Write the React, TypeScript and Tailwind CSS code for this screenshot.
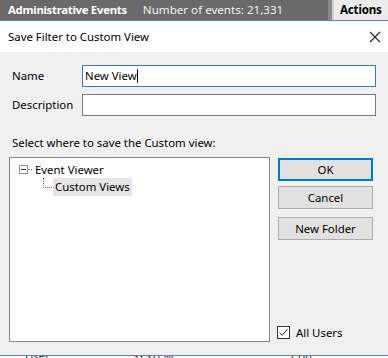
import React from "react";

export default function App() {
  const font = { fontFamily: '"Noto Sans", "Segoe UI", sans-serif' };
  return (
    <div className="w-[388px] h-[358px] overflow-hidden bg-white flex flex-col text-[11.4px] text-black" style={font}>
      {/* top bar */}
      <div className="h-[20px] flex bg-[#6a6a6a] shrink-0">
        <div className="flex-1 flex items-center pl-[8px] text-white">
          <span className="font-bold text-[11.4px] tracking-[-0.3px]">Administrative Events</span>
          <span className="ml-[16px] text-[#f0f0f0] text-[11.6px]">Number of events: 21,331</span>
        </div>
        <div className="w-[4px] bg-[#8a8a8a]" />
        <div className="w-[2px] bg-[#d0d0d0]" />
        <div className="w-[54px] bg-[#ececec] flex items-center pl-[6px] font-bold text-[11.6px] tracking-[-0.2px]">Actions</div>
      </div>
      <div className="h-[1px] bg-[#4a86c0] shrink-0" />
      {/* dialog title */}
      <div className="h-[31px] bg-white flex items-center justify-between pl-[8px] pr-[7px] shrink-0">
        <span>Save Filter to Custom View</span>
        <svg width="12" height="12" viewBox="0 0 12 12">
          <path d="M1 1 L11 11 M11 1 L1 11" stroke="#222" strokeWidth="1.1" />
        </svg>
      </div>
      {/* body */}
      <div className="h-[303px] bg-[#f0f0f0] flex flex-col pl-[9px] shrink-0">
        <div className="flex items-center mt-[13px] h-[22px]">
          <span className="w-[73px] pl-[3px]">Name</span>
          <div className="w-[294px] h-[22px] bg-white border border-[#3b78ab] flex items-center pl-[2px]">
            <span>New View</span>
            <span className="w-[1px] h-[14px] bg-black" />
          </div>
        </div>
        <div className="flex items-center mt-[7px] h-[22px]">
          <span className="w-[73px] pl-[3px]">Description</span>
          <div className="w-[294px] h-[22px] bg-white border border-[#7a7a7a]" />
        </div>
        <div className="mt-[20px] pl-[3px] h-[14px] leading-[14px]">Select where to save the Custom view:</div>
        <div className="flex mt-[7px]">
          <div className="w-[261px] h-[185px] bg-white border border-[#828790] pt-[3px]">
            <div className="flex items-center h-[17px] pl-[9px]">
              <div className="w-[9px] h-[9px] border border-[#919191] flex items-center justify-center bg-white">
                <div className="w-[5px] h-[1px] bg-[#1f3f7a]" />
              </div>
              <div className="w-[4px] border-t border-dotted border-[#777]" />
              <span className="ml-[3px]">Event Viewer</span>
            </div>
            <div className="flex h-[18px] pl-[33px]">
              <div className="w-[9px] h-[10px] border-l border-b border-dotted border-[#777]" />
              <div className="ml-[1px] bg-[#e5e5e5] px-[2px] flex items-center">Custom Views</div>
            </div>
          </div>
          <div className="flex flex-col ml-[8px] w-[95px]">
            <div className="mt-[1px] h-[23px] border-2 border-[#0078d7] bg-[#e1e1e1] flex items-center justify-center">OK</div>
            <div className="mt-[5px] h-[23px] border border-[#adadad] bg-[#e1e1e1] flex items-center justify-center">Cancel</div>
            <div className="mt-[8px] h-[23px] border border-[#adadad] bg-[#e1e1e1] flex items-center justify-center">New Folder</div>
            <div className="mt-[84px] flex items-center">
              <div className="ml-[-1px] w-[13px] h-[13px] border border-[#333] bg-white flex items-center justify-center">
                <svg width="11" height="11" viewBox="0 0 11 11">
                  <path d="M1.5 5.5 L4.2 8.3 L9.5 2" stroke="#333" strokeWidth="1" fill="none" />
                </svg>
              </div>
              <span className="ml-[6px]">All Users</span>
            </div>
          </div>
        </div>
      </div>
      <div className="h-[1px] bg-[#4a86c0] shrink-0" />
      <div className="flex-1 bg-white relative overflow-hidden">
        <span className="absolute left-[25px] top-[-9px] text-[#333]">User</span>
        <span className="absolute left-[132px] top-[-9px] text-[#333]">SYSTEM</span>
        <span className="absolute left-[291px] top-[-9px] text-[#333]">Con</span>
      </div>
    </div>
  );
}
